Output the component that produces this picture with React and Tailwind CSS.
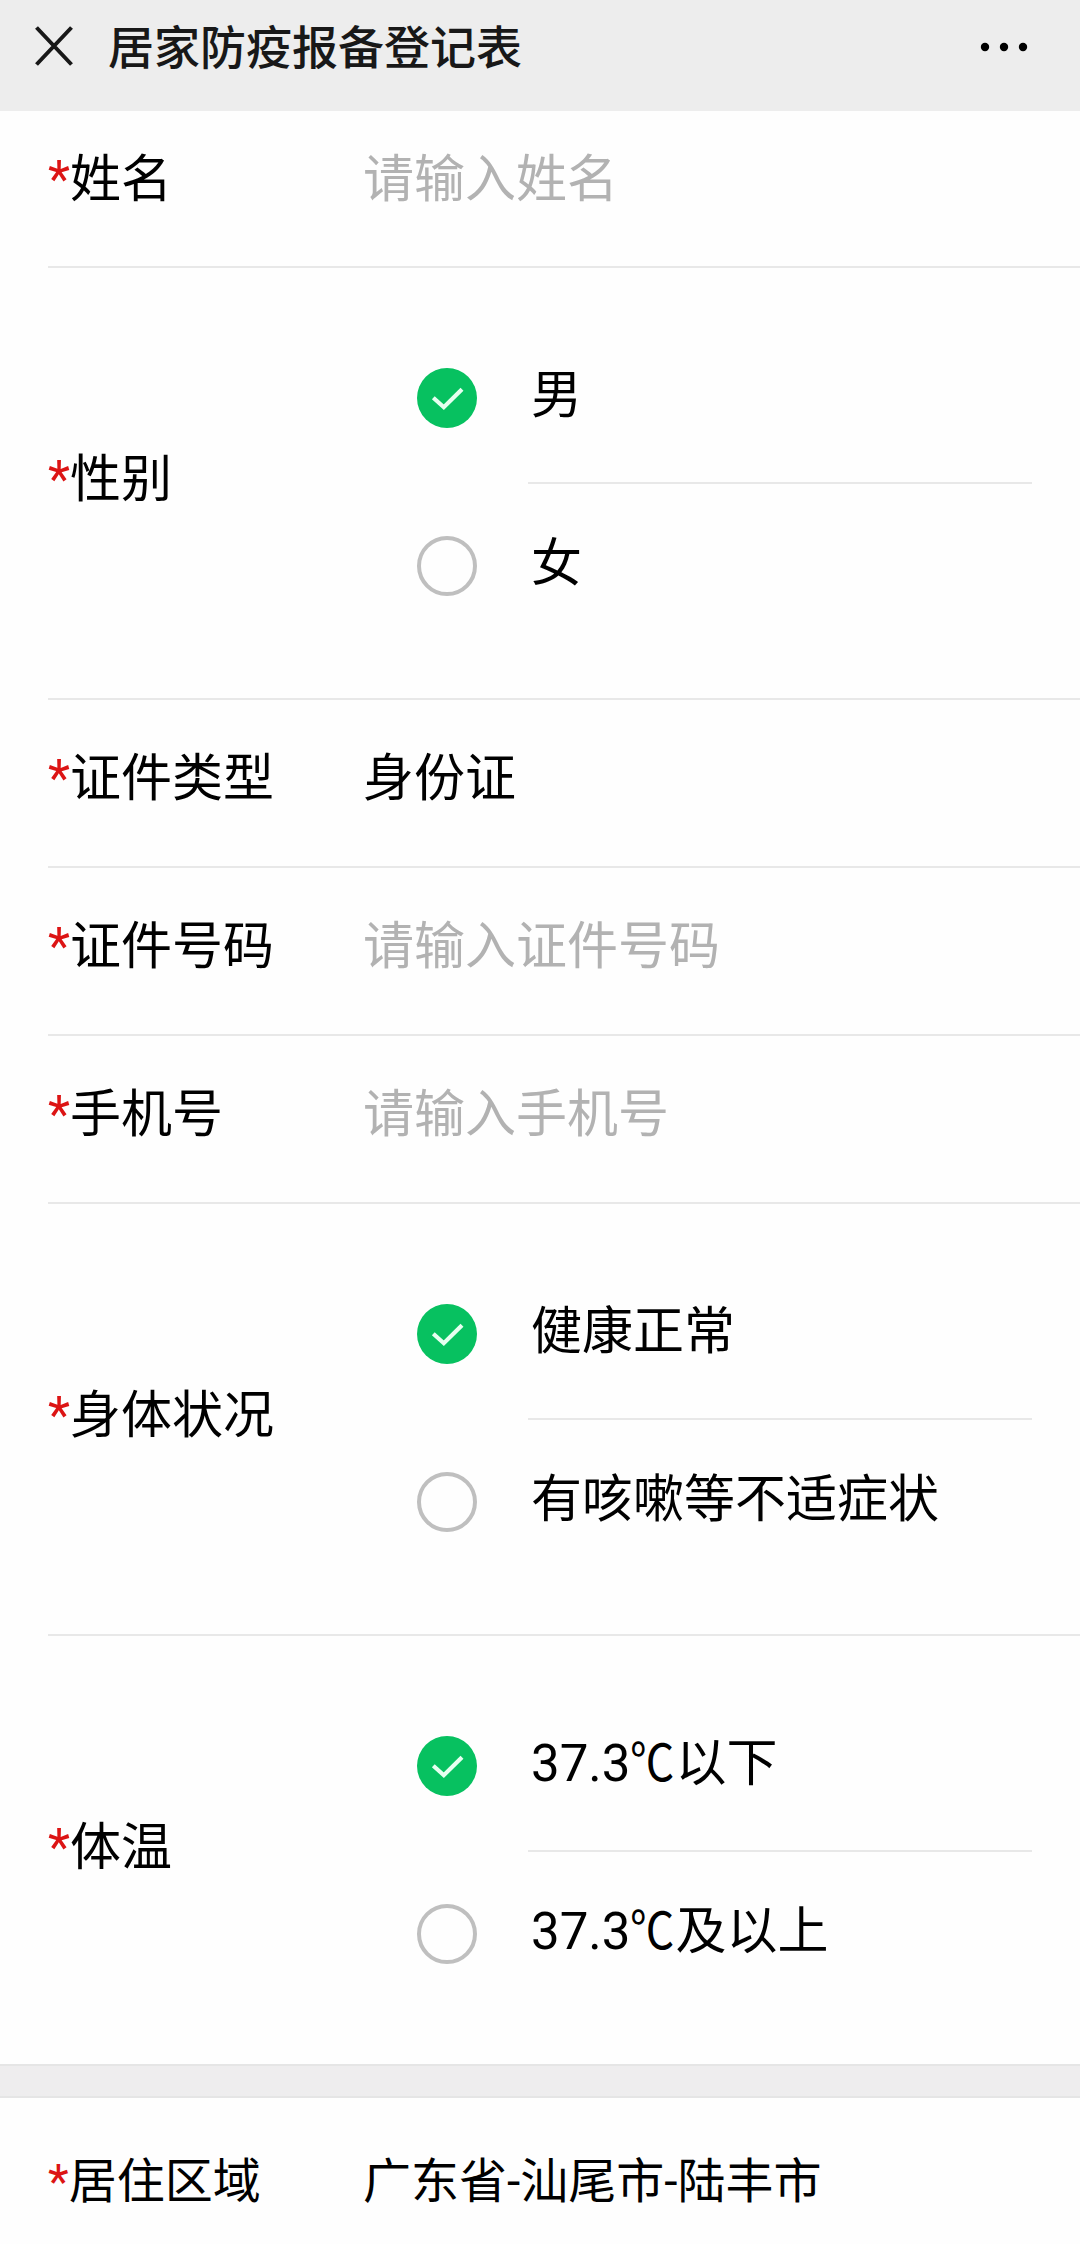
import React from "react";

function Label({ text, className = "text-[51px]" }) {
  return (
    <div className="w-[315px] shrink-0 whitespace-nowrap">
      <span className={className}>
        <span className="text-[#dc1414]">*</span>
        {text}
      </span>
    </div>
  );
}

function Field({ label, value, placeholder, height = "h-[168px] pb-[9px]" }) {
  return (
    <div className={`ml-12 flex items-center border-b-2 border-[#e8e8e8] ${height}`}>
      <Label text={label} />
      {value ? (
        <span className="whitespace-nowrap">{value}</span>
      ) : (
        <span className="whitespace-nowrap text-[#b2b2b2]">{placeholder}</span>
      )}
    </div>
  );
}

function Radio({ checked }) {
  if (!checked) {
    return <span className="mb-1 size-[60px] shrink-0 rounded-full border-4 border-[#bfbfbf]" />;
  }
  return (
    <span className="mb-1 size-[60px] shrink-0 rounded-full bg-[#07c160]">
      <svg viewBox="0 0 60 60" className="size-full" fill="none" stroke="#e6fff0" strokeWidth="4.2">
        <path d="M16.3 29.7 26.8 39.2 45 21.3" />
      </svg>
    </span>
  );
}

function Temperature({ degrees, range }) {
  return (
    <span>
      <span className="[font-family:Roboto]">{degrees}</span>
      <span className="inline-block w-[45px] origin-left scale-x-[0.87]">℃</span>
      {range}
    </span>
  );
}

function RadioField({ label, options, last = false }) {
  return (
    <div
      className={
        last
          ? "ml-12 flex h-[428px] items-start pt-12"
          : "ml-12 flex h-[432px] items-start border-b-2 border-[#e8e8e8] pt-12"
      }
    >
      <div className="flex h-[336px] items-center pb-[10px]">
        <Label text={label} />
      </div>
      <div className="flex grow flex-col pr-12 pl-[54px]">
        {options.map((option, i) => (
          <div key={i} className="flex h-[168px] items-center">
            <Radio checked={i === 0} />
            <div
              className={
                i === 0
                  ? "ml-[51px] flex h-full grow items-center border-b-2 border-[#e8e8e8] pb-2 pl-[3px] whitespace-nowrap"
                  : "ml-[51px] flex h-full grow items-center pb-[10px] pl-[3px] whitespace-nowrap"
              }
            >
              {option}
            </div>
          </div>
        ))}
      </div>
    </div>
  );
}

export default function App() {
  return (
    <div className="h-[2244px] w-[1080px] overflow-hidden bg-[#fefefe] [font-family:Roboto,'Noto_Sans_CJK_SC',sans-serif] text-[51px] leading-none text-black">
      <header className="flex h-[111px] items-center bg-[#ededed] pr-[52px] pb-4 pl-[35px]">
        <svg viewBox="0 0 38 40" className="mb-1 h-10 w-[38px]" fill="none" stroke="#181818" strokeWidth="4">
          <path d="M1.5 1.5 36.5 38.5M36.5 1.5 1.5 38.5" />
        </svg>
        <h1 className="ml-[35px] grow text-[46px] font-medium text-[#181818]">居家防疫报备登记表</h1>
        <svg viewBox="0 0 48 10" className="mb-0.5 h-[10px] w-12" fill="#000">
          <circle cx="5" cy="5" r="4.2" />
          <circle cx="24" cy="5" r="4.2" />
          <circle cx="43" cy="5" r="4.2" />
        </svg>
      </header>
      <main>
        <Field label="姓名" placeholder="请输入姓名" height="h-[157px] pb-[19px]" />
        <RadioField label="性别" options={["男", "女"]} />
        <Field label="证件类型" value="身份证" />
        <Field label="证件号码" placeholder="请输入证件号码" />
        <Field label="手机号" placeholder="请输入手机号" />
        <RadioField label="身体状况" options={["健康正常", "有咳嗽等不适症状"]} />
        <RadioField
          label="体温"
          options={[
            <Temperature degrees="37.3" range="以下" />,
            <Temperature degrees="37.3" range="及以上" />,
          ]}
          last
        />
        <div className="h-[34px] border-y-2 border-[#e5e5e5] bg-[#eeedee]" />
        <div className="ml-12 flex h-[168px] items-center text-[48px]">
          <Label text="居住区域" className="text-[48px]" />
          <span className="whitespace-nowrap">广东省-汕尾市-陆丰市</span>
        </div>
      </main>
    </div>
  );
}
